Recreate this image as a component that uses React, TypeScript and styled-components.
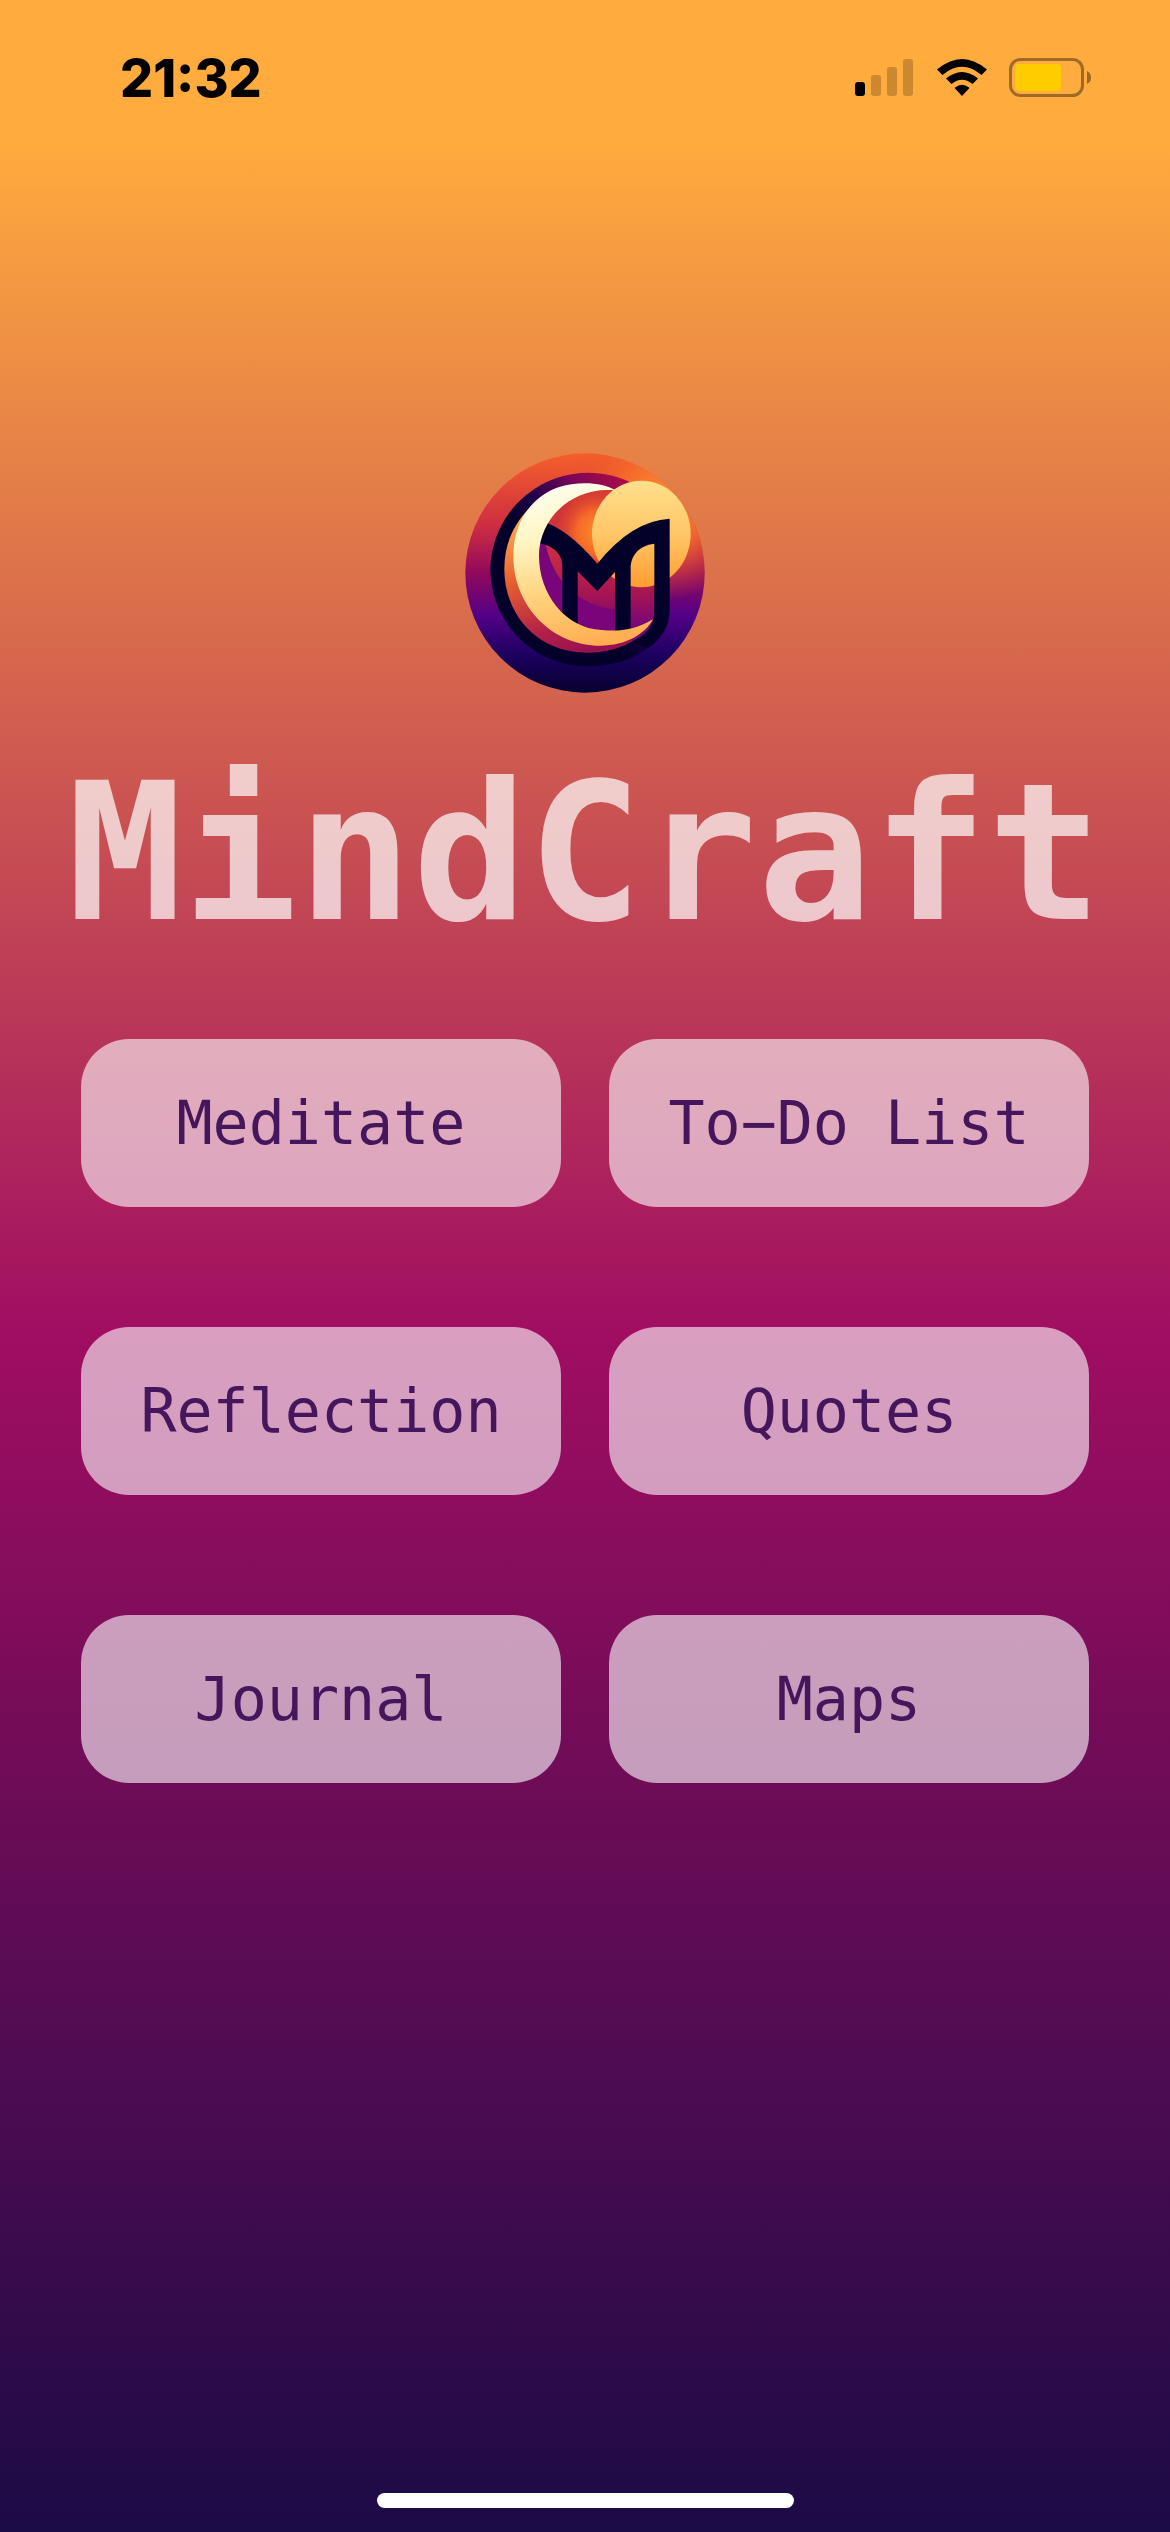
import React from 'react';
import styled, { createGlobalStyle } from 'styled-components';

const GlobalStyle = createGlobalStyle`
  *, *::before, *::after { box-sizing: border-box; }
  body { margin: 0; background: #1b0b46; }
`;

const Screen = styled.div`
  min-height: 100vh;
  display: flex;
  flex-direction: column;
  background: #ffab3d;
`;

const StatusBar = styled.header`
  height: 141px;
  padding: 0 78px 0 120px;
  display: flex;
  align-items: flex-start;
  justify-content: space-between;
`;

const Clock = styled.time`
  padding-top: 49px;
  font: 800 52px/60px Inter, sans-serif;
  color: #000;
`;

const Indicators = styled.div`
  padding-top: 57px;
  display: flex;
  align-items: flex-start;
  gap: 22px;

  svg { display: block; }
`;

const Body = styled.main`
  flex: 1;
  display: flex;
  flex-direction: column;
  align-items: center;
  padding: 312px 81px 0;
  background: linear-gradient(180deg, #ffab3d 0%, #a00d62 50%, #1b0b46 100%);
`;

const Title = styled.h1`
  margin: 56px 0 82px;
  font: 700 191px/208px 'DejaVu Sans Mono', monospace;
  color: rgba(255, 255, 255, 0.7);
`;

const Menu = styled.nav`
  width: 100%;
  display: grid;
  grid-template-columns: 1fr 1fr;
  gap: 120px 48px;
`;

const MenuButton = styled.button`
  height: 168px;
  border: 0;
  border-radius: 48px;
  background: rgba(255, 255, 255, 0.6);
  color: #46165d;
  font: 400 60px/72px 'DejaVu Sans Mono', monospace;
`;

const HomeBar = styled.div`
  width: 417px;
  height: 15px;
  margin: auto 0 24px;
  border-radius: 8px;
  background: #fff;
`;

const items = ['Meditate', 'To−Do List', 'Reflection', 'Quotes', 'Journal', 'Maps'];

const Signal = () => (
  <svg width="60" height="40" viewBox="0 0 60 40" aria-label="Signal">
    <rect x="0" y="25" width="10" height="14" rx="3" />
    <g fillOpacity="0.2">
      <rect x="16" y="18" width="10" height="21" rx="3" />
      <rect x="32" y="10" width="10" height="29" rx="3" />
      <rect x="48" y="2" width="10" height="37" rx="3" />
    </g>
  </svg>
);

const Wifi = () => (
  <svg width="50" height="40" viewBox="0 0 50 40" aria-label="Wi-Fi">
    <path d="M0 12.500Q25 -8.500 50 12.500L44.500 18Q25 1.500 5.500 18Z" />
    <path d="M9 21.500Q25 8.500 41 21.500L35.500 27Q25 18.500 14.500 27Z" />
    <path d="M18 30.500Q25 25 32 30.500Q32.500 31 32 31.500L25 39L18 31.500Q17.500 31 18 30.500Z" />
  </svg>
);

const Battery = () => (
  <svg width="83" height="40" viewBox="0 0 83 40" aria-label="Battery">
    <rect x="1.500" y="2.500" width="72" height="36" rx="10" fill="none" stroke="#000" strokeOpacity="0.38" strokeWidth="3" />
    <rect x="6" y="7" width="46" height="27" rx="4" fill="#ffcc00" />
    <path d="M78 14Q82 16 82 20.500Q82 25 78 27Z" fillOpacity="0.4" />
  </svg>
);

const Logo = () => (
  <svg width="240" height="240" viewBox="45 38 720 718" role="img" aria-label="MindCraft logo">
    <defs>
      <linearGradient id="disc" x1="0.5" y1="0" x2="0.5" y2="1">
        <stop offset="0" stopColor="#f4602a" />
        <stop offset="0.3" stopColor="#cf2d42" />
        <stop offset="0.5" stopColor="#92095c" />
        <stop offset="0.68" stopColor="#520087" />
        <stop offset="0.84" stopColor="#1d0060" />
        <stop offset="1" stopColor="#060030" />
      </linearGradient>
      <radialGradient id="glow" gradientUnits="userSpaceOnUse" cx="640" cy="190" r="290">
        <stop offset="0" stopColor="#ff9a35" />
        <stop offset="0.45" stopColor="#f8702a" stopOpacity="0.85" />
        <stop offset="1" stopColor="#e8502a" stopOpacity="0" />
      </radialGradient>
      <linearGradient id="ring" gradientUnits="userSpaceOnUse" x1="490" y1="90" x2="245" y2="300">
        <stop offset="0" stopColor="#a80c48" />
        <stop offset="0.35" stopColor="#7a0658" />
        <stop offset="0.7" stopColor="#24004c" />
        <stop offset="1" stopColor="#03002a" />
      </linearGradient>
      <linearGradient id="inner" gradientUnits="userSpaceOnUse" x1="440" y1="140" x2="440" y2="600">
        <stop offset="0" stopColor="#d83a30" />
        <stop offset="0.45" stopColor="#c62b45" />
        <stop offset="0.68" stopColor="#a81650" />
        <stop offset="0.9" stopColor="#7a0578" />
      </linearGradient>
      <radialGradient id="flare" gradientUnits="userSpaceOnUse" cx="445" cy="275" r="160">
        <stop offset="0" stopColor="#ff8f26" />
        <stop offset="0.4" stopColor="#f56a28" />
        <stop offset="1" stopColor="#c52338" stopOpacity="0" />
      </radialGradient>
      <linearGradient id="rim" gradientUnits="userSpaceOnUse" x1="210" y1="230" x2="400" y2="640">
        <stop offset="0" stopColor="#ffad50" />
        <stop offset="0.35" stopColor="#e9622f" />
        <stop offset="0.75" stopColor="#b32048" />
        <stop offset="1" stopColor="#981050" />
      </linearGradient>
      <linearGradient id="sun" x1="0" y1="0" x2="0" y2="1">
        <stop offset="0" stopColor="#ffdf8c" />
        <stop offset="0.5" stopColor="#ffc768" />
        <stop offset="1" stopColor="#ff9c30" />
      </linearGradient>
      <linearGradient id="moon" gradientUnits="userSpaceOnUse" x1="300" y1="130" x2="420" y2="610">
        <stop offset="0" stopColor="#fffef0" />
        <stop offset="0.3" stopColor="#fff6c4" />
        <stop offset="0.65" stopColor="#ffd27c" />
        <stop offset="1" stopColor="#ffae52" />
      </linearGradient>
      <clipPath id="discClip"><circle cx="405" cy="397" r="359" /></clipPath>
    </defs>
    <circle cx="405" cy="397" r="359" fill="url(#disc)" />
    <g clipPath="url(#discClip)"><circle cx="640" cy="190" r="290" fill="url(#glow)" /></g>
    <path d="M535 122A294 294 0 0 0 121 386C121 545 250 677 414 677C550 677 659 600 659 510V300Z" fill="url(#ring)" />
    <path d="M497 149C420 135 330 150 270 215L240 386L300 540L410 600L545 603C590 580 612 560 613 520V309L560 200Z" fill="url(#inner)" />
    <path d="M255 285L288 315Q325 480 495 508V600H360L260 450Z" fill="#7a057a" />
    <path d="M163 386C163 310 190 250 245 195L225 400L360 575L545 590V603C500 630 440 636 410 636C260 636 163 520 163 386Z" fill="url(#rim)" />
    <circle cx="445" cy="275" r="124" fill="url(#flare)" />
    <ellipse cx="574" cy="280" rx="148" ry="160" fill="url(#sun)" />
    <path fillRule="evenodd" fill="#03002a" d="M270 240Q350 260 442 369Q545 240 659 234V510C659 555 635 595 595 622L540 606C585 585 613 560 613 510V309C565 315 542 345 542 385V580H495V394L442 451L383 392V560H337V375C337 345 315 315 265 308Z" />
    <path d="M497 149C455 123 380 122 325 140C240 170 190 250 190 345C190 500 310 615 450 615C530 615 585 580 609 536C550 572 500 572 455 568C345 562 267 460 267 345C267 235 365 135 497 149Z" fill="url(#moon)" />
  </svg>
);

export default function App() {
  return (
    <>
      <GlobalStyle />
      <Screen>
        <StatusBar>
          <Clock>21:32</Clock>
          <Indicators>
            <Signal />
            <Wifi />
            <Battery />
          </Indicators>
        </StatusBar>
        <Body>
          <Logo />
          <Title>MindCraft</Title>
          <Menu>
            {items.map((label) => (
              <MenuButton key={label} type="button">{label}</MenuButton>
            ))}
          </Menu>
          <HomeBar />
        </Body>
      </Screen>
    </>
  );
}
